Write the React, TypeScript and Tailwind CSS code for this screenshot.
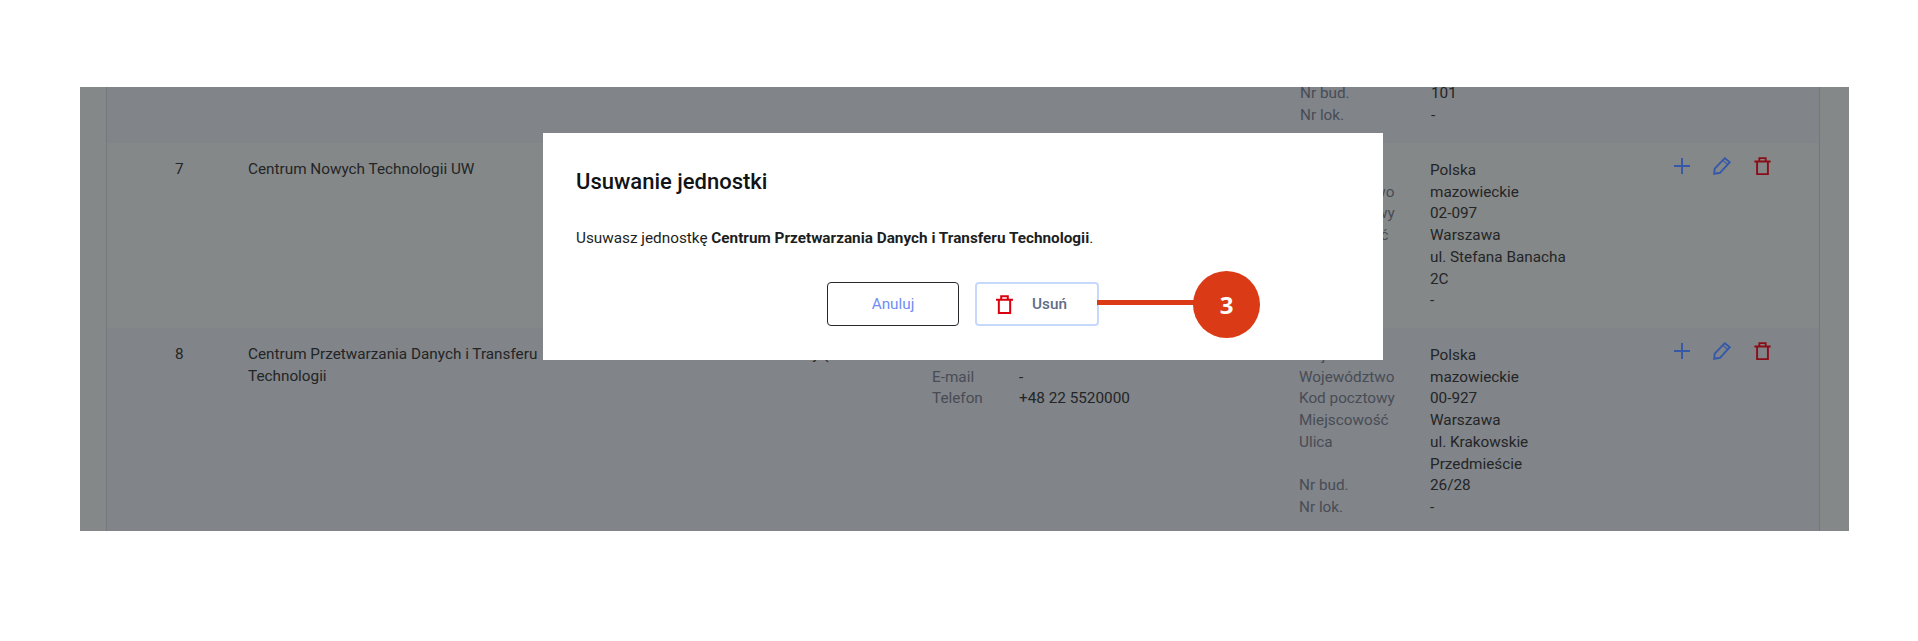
const F = "[font-family:Roboto,sans-serif]";

function Plus({ className }: { className: string }) {
  return (
    <svg viewBox="0 0 16 16" className={className} fill="none" stroke="currentColor" strokeWidth="1.9">
      <path d="M8 0v16M0 8h16" />
    </svg>
  );
}
function Pencil({ className }: { className: string }) {
  return (
    <svg viewBox="0 0 18 18" className={className} fill="none" stroke="currentColor" strokeWidth="1.9" strokeLinejoin="miter">
      <path d="M1.2 16.8l.5-5.2L11.8 1.2l5 4L7 15.8z" />
      <path d="M9.8 3.4l4.8 4" strokeWidth="1.2" />
    </svg>
  );
}
function Trash({ className }: { className: string }) {
  return (
    <svg viewBox="0 0 18 20" className={className} fill="none" stroke="currentColor" strokeWidth="2.1">
      <path d="M0 5h18M3 5v14h12V5M5.5 5V1.2h7V5" />
    </svg>
  );
}

function Rows({ items, cols }: { items: [string, string][]; cols: string }) {
  return (
    <div className={`grid ${cols} leading-[21.7px]`}>
      {items.map(([k, v], i) => (
        <div key={i} className="contents">
          <div className="text-[#484c56]">{k}</div>
          <div className="text-[#232527]">{v}</div>
        </div>
      ))}
    </div>
  );
}

function Actions() {
  return (
    <div className="-mt-[2px] flex items-start">
      <Plus className="w-[16px] h-[16px] mt-[1px] text-[#3559a8]" />
      <Pencil className="w-[18px] h-[18px] ml-[23px] text-[#3559a8]" />
      <Trash className="w-[17px] h-[18px] ml-[23px] text-[#8a0d17]" />
    </div>
  );
}

function Row({
  bg, h, n, name, kind, contact, addr,
}: {
  bg: string; h: string; n: string; name: string; kind: string;
  contact: [string, string][]; addr: [string, string][];
}) {
  return (
    <div className={`flex pt-[16px] text-[15.3px] leading-[21.7px] text-[#232527] ${bg} ${h}`}>
      <div className="w-[141px] pl-[68px] shrink-0">{n}</div>
      <div className="w-[310px] shrink-0">{name}</div>
      <div className="w-[374px] shrink-0 pl-[188px]">{kind}</div>
      <div className="w-[367px] shrink-0 pt-[1px]"><div className="w-[300px]"><Rows items={contact} cols="grid-cols-[87px_1fr]" /></div></div>
      <div className="w-[375px] shrink-0 pt-[1px]"><div className="w-[271px]"><Rows items={addr} cols="grid-cols-[131px_1fr]" /></div></div>
      <Actions />
    </div>
  );
}

export default function App() {
  return (
    <div className={`${F} w-[1918px] h-[641px] bg-white pt-[87px] overflow-hidden`}>
      <div className="relative ml-[80px] w-[1769px] h-[444px] bg-[#858888] overflow-hidden">
        <div className="mx-[26px] w-[1714px] h-full border-x border-[#74777b]">
          <div className="h-[56px] bg-[#818488] pl-[1193px] text-[15.3px] leading-[21.7px]">
            <div className="-translate-y-[4px]">
              <Rows items={[["Nr bud.", "101"], ["Nr lok.", "-"]]} cols="grid-cols-[131px_1fr]" />
            </div>
          </div>
          <Row
            bg="bg-[#858888]"
            h="h-[185px]"
            n="7"
            name="Centrum Nowych Technologii UW"
            kind=""
            contact={[]}
            addr={[
              ["Kraj", "Polska"],
              ["Województwo", "mazowieckie"],
              ["Kod pocztowy", "02-097"],
              ["Miejscowość", "Warszawa"],
              ["Ulica", "ul. Stefana Banacha"],
              ["Nr bud.", "2C"],
              ["Nr lok.", "-"],
            ]}
          />
          <Row
            bg="bg-[#818488]"
            h="h-[203px]"
            n="8"
            name="Centrum Przetwarzania Danych i Transferu Technologii"
            kind="Uczelniany ("
            contact={[
              ["WWW", "-"],
              ["E-mail", "-"],
              ["Telefon", "+48 22 5520000"],
            ]}
            addr={[
              ["Kraj", "Polska"],
              ["Województwo", "mazowieckie"],
              ["Kod pocztowy", "00-927"],
              ["Miejscowość", "Warszawa"],
              ["Ulica", "ul. Krakowskie Przedmieście"],
              ["Nr bud.", "26/28"],
              ["Nr lok.", "-"],
            ]}
          />
        </div>

        <div className="absolute left-[463px] top-[46px] w-[840px] h-[227px] bg-white px-[33px] pt-[34px]">
          <h2 className="text-[22px] leading-[30px] font-medium text-[#111316]">Usuwanie jednostki</h2>
          <p className="mt-[31px] text-[15.3px] leading-[21px] text-[#1c1e21]">
            Usuwasz jednostkę <b className="font-bold">Centrum Przetwarzania Danych i Transferu Technologii</b>.
          </p>
          <div className="mt-[33px] ml-[251px] flex gap-[16px] text-[15.3px]">
            <button className="w-[132px] h-[44px] rounded-[4px] border border-[#26282c] text-[#6f8df5]">Anuluj</button>
            <button className="w-[124px] h-[44px] rounded-[4px] border-2 border-[#c7d9fb] flex items-center pl-[19px] text-[#5f6b85] font-medium">
              <Trash className="w-[17px] h-[19px] text-[#d9000f]" />
              <span className="ml-[19px]">Usuń</span>
            </button>
          </div>
        </div>

        <div className="absolute left-[1017px] top-[213px] w-[120px] h-[5px] bg-[#db3a16]" />
        <div className="absolute left-[1113px] top-[184px] w-[67px] h-[67px] rounded-full bg-[#db3a16] flex items-center justify-center text-white text-[24px] font-bold [font-family:'Open_Sans',sans-serif]">
          3
        </div>
      </div>
    </div>
  );
}
